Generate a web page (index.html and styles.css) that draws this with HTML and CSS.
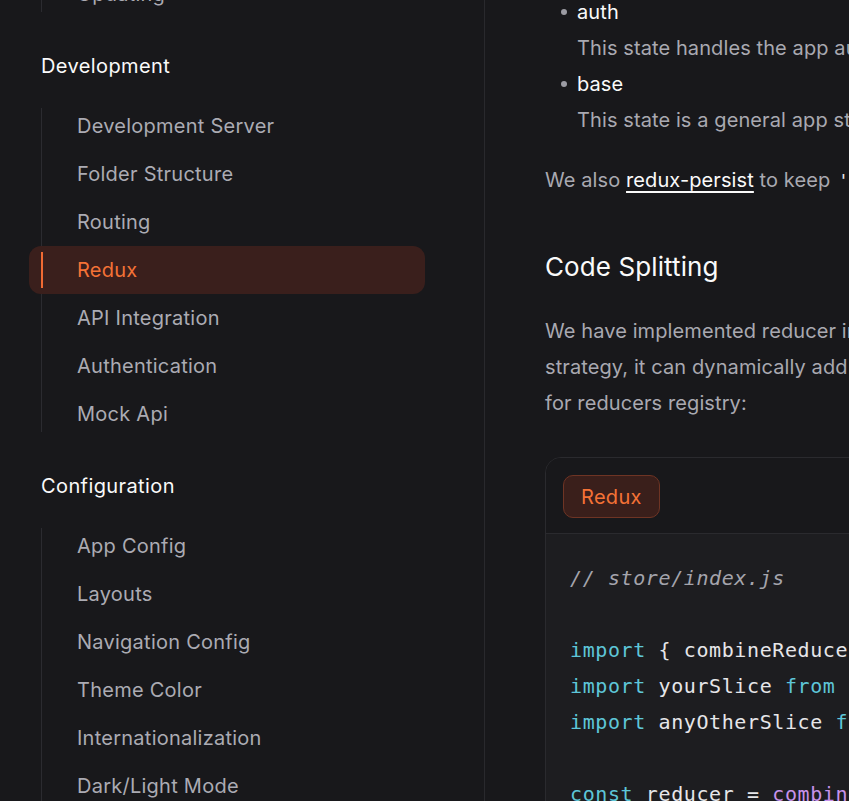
FILE: index.html
```html
<!DOCTYPE html>
<html lang="en">
<head>
<meta charset="utf-8">
<title>Redux - Docs</title>
<link rel="stylesheet" href="styles.css">
</head>
<body>
<div class="layout">
  <aside class="sidebar">
    <ul class="nav-list nav-list--top">
      <li class="nav-item">Updating</li>
    </ul>
    <section class="nav-group">
      <h3 class="nav-heading">Development</h3>
      <ul class="nav-list">
        <li class="nav-item">Development Server</li>
        <li class="nav-item">Folder Structure</li>
        <li class="nav-item">Routing</li>
        <li class="nav-item nav-item--active">Redux</li>
        <li class="nav-item">API Integration</li>
        <li class="nav-item">Authentication</li>
        <li class="nav-item">Mock Api</li>
      </ul>
    </section>
    <section class="nav-group">
      <h3 class="nav-heading">Configuration</h3>
      <ul class="nav-list">
        <li class="nav-item">App Config</li>
        <li class="nav-item">Layouts</li>
        <li class="nav-item">Navigation Config</li>
        <li class="nav-item">Theme Color</li>
        <li class="nav-item">Internationalization</li>
        <li class="nav-item">Dark/Light Mode</li>
        <li class="nav-item">Direction</li>
      </ul>
    </section>
  </aside>
  <main class="content">
    <ul class="state-list">
      <li>
        <span class="state-name">auth</span>
        <p class="state-desc">This state handles the app authentication status and token.</p>
      </li>
      <li>
        <span class="state-name">base</span>
        <p class="state-desc">This state is a general app state shared across modules.</p>
      </li>
    </ul>
    <p class="para">We also <a class="link" href="#">redux-persist</a> to keep <code class="inline-code">'auth'</code> state persisted.</p>
    <h2 class="section-title">Code Splitting</h2>
    <p class="para">We have implemented reducer injection as our code splitting<br>strategy, it can dynamically add reducers to the store, here is the setup<br>for reducers registry:</p>
    <div class="code-card">
      <div class="code-tabs">
        <span class="code-tab">Redux</span>
      </div>
      <pre class="code-body"><span class="c-com">// store/index.js</span>

<span class="c-kw">import</span> { combineReducers } <span class="c-kw">from</span> <span class="c-str">'@reduxjs/toolkit'</span>
<span class="c-kw">import</span> yourSlice <span class="c-kw">from</span> <span class="c-str">'./slices/yourSlice'</span>
<span class="c-kw">import</span> anyOtherSlice <span class="c-kw">from</span> <span class="c-str">'./slices/anyOtherSlice'</span>

<span class="c-kw">const</span> reducer = <span class="c-fn">combineReducers</span>({</pre>
    </div>
  </main>
</div>
</body>
</html>
```
FILE: styles.css
```css
* { box-sizing: border-box; }

html, body {
  margin: 0;
  padding: 0;
  background: #18181b;
  height: 100%;
  overflow: hidden;
}

body {
  font-family: "Inter", "Noto Sans", sans-serif;
  color: #a9a9b1;
  font-size: 20px;
  letter-spacing: 0.25px;
}

.layout {
  display: flex;
  height: 801px;
  overflow: hidden;
}

/* Sidebar */
.sidebar {
  flex: 0 0 485px;
  border-right: 1px solid #29292d;
  padding: 0 71px 0 41px;
}

.nav-list {
  list-style: none;
  margin: 0;
  padding: 0;
  border-left: 1px solid #2b2b30;
  display: flex;
  flex-direction: column;
  gap: 12px;
}

.nav-list--top {
  margin-top: -24px;
}

.nav-group {
  margin-top: 40px;
}

.nav-heading {
  margin: 0 0 28px;
  font-size: 20px;
  line-height: 28px;
  font-weight: 400;
  letter-spacing: 0.4px;
  color: #fafafa;
}

.nav-item {
  height: 36px;
  line-height: 36px;
  padding-left: 35px;
  font-size: 20px;
  color: #ababb3;
  white-space: nowrap;
  position: relative;
}

.nav-item--active {
  height: 48px;
  line-height: 48px;
  margin: -6px -12px -6px -13px;
  padding-left: 48px;
  border-radius: 12px;
  background: #3a1f1c;
  color: #f47236;
}

.nav-item--active::before {
  content: "";
  position: absolute;
  left: 12px;
  top: 6px;
  bottom: 6px;
  width: 2px;
  background: #f06a33;
}

/* Main */
.content {
  flex: 1;
  min-width: 0;
  padding-left: 60px;
  white-space: nowrap;
  letter-spacing: 0.1px;
}

.state-list {
  list-style: none;
  margin: -6px 0 0;
  padding: 0 0 0 32px;
}

.state-list li {
  position: relative;
}

.state-list li::before {
  content: "";
  position: absolute;
  left: -16px;
  top: 15px;
  width: 6px;
  height: 6px;
  border-radius: 50%;
  background: #9b9ba3;
}

.state-name {
  display: block;
  line-height: 36px;
  color: #fafafa;
  font-weight: 400;
}

.state-desc {
  margin: 0;
  line-height: 36px;
}

.para {
  margin: 24px 0 0;
  line-height: 36px;
}

.link {
  color: #fafafa;
  font-weight: 400;
  text-decoration: underline;
  text-underline-offset: 4px;
  text-decoration-thickness: 2px;
}

.inline-code {
  font-family: "DejaVu Sans Mono", monospace;
  font-size: 18px;
  letter-spacing: 0;
  color: #e4e4e7;
  margin-left: 2px;
}

.section-title {
  margin: 48px 0 0;
  font-size: 26px;
  line-height: 40px;
  font-weight: 400;
  color: #fafafa;
}

.section-title + .para {
  margin-top: 26px;
}

.code-card {
  margin-top: 36px;
  width: 700px;
  border: 1px solid #2a2a2e;
  border-radius: 16px;
  overflow: hidden;
}

.code-tabs {
  display: flex;
  padding: 17px 17px 15px;
  border-bottom: 1px solid #2a2a2e;
  background: #18181b;
}

.code-tab {
  display: inline-flex;
  align-items: center;
  height: 43px;
  padding: 0 17px;
  border: 1px solid #6e3424;
  border-radius: 10px;
  color: #f47236;
  font-size: 20px;
  letter-spacing: 0.3px;
  background:
    linear-gradient(90deg, transparent, #f07038 50%, transparent) top / 100% 1px no-repeat,
    linear-gradient(90deg, transparent, #f07038 50%, transparent) bottom / 100% 1px no-repeat,
    #3a1f1b;
  background-origin: border-box;
}

.code-body {
  margin: 0;
  padding: 26px 24px 24px;
  background: #1d1d20;
  font-family: "DejaVu Sans Mono", monospace;
  font-size: 20px;
  letter-spacing: 0.6px;
  line-height: 36px;
  color: #e6e6e9;
}

.c-com { color: #a4a4ac; font-style: italic; }
.c-kw { color: #5ec6d8; }
.c-str { color: #b6d77a; }
.c-fn { color: #c792ea; }
```
